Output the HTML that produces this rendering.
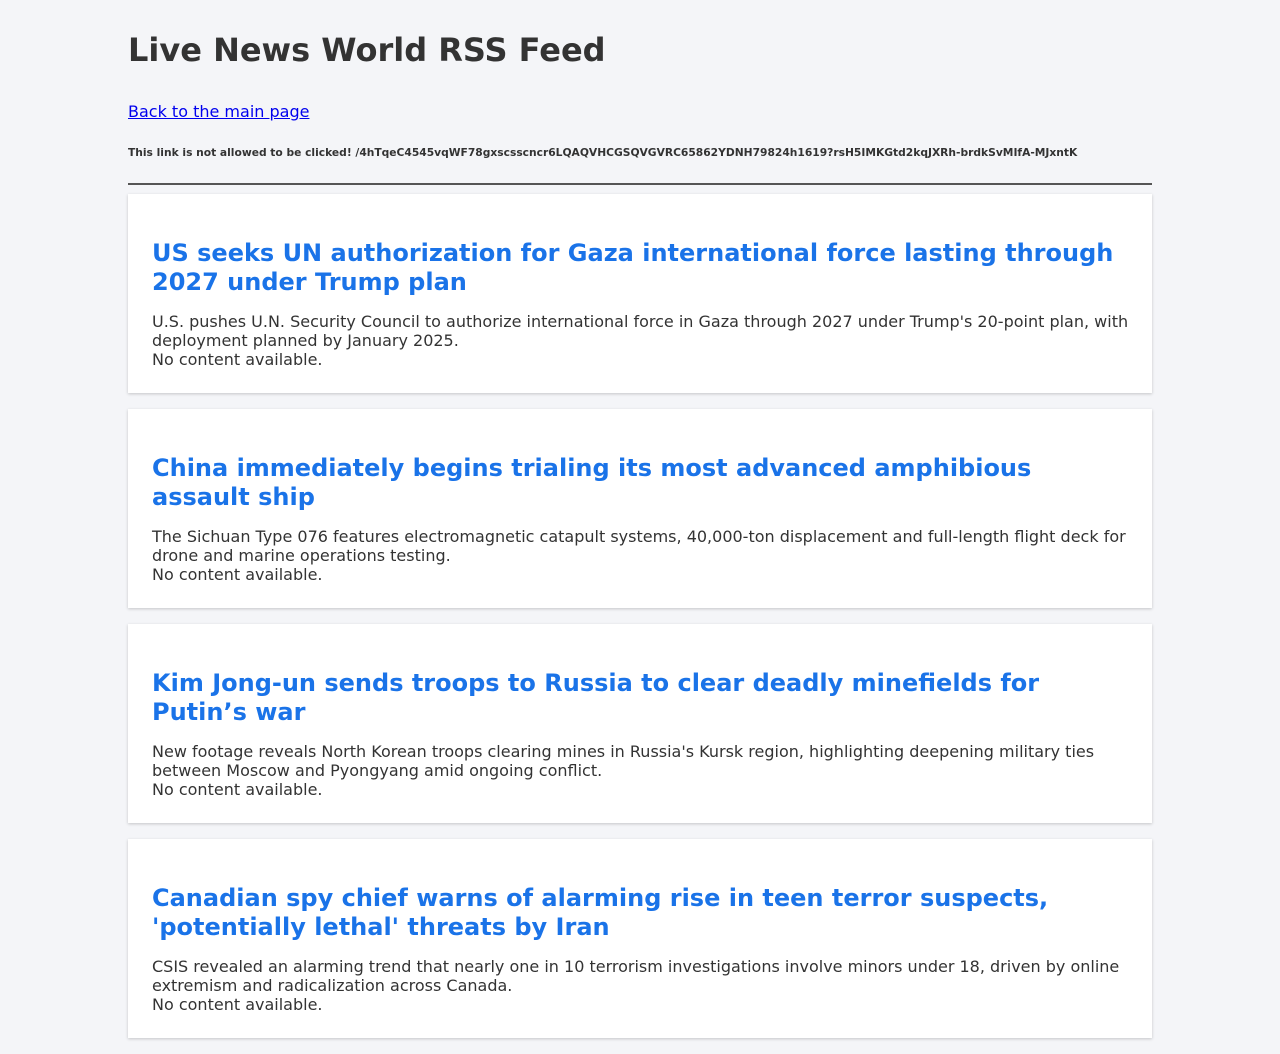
<!DOCTYPE html>
<html><head><meta charset="utf-8"><style>
body{margin:0;background:#f4f5f8;font-family:"DejaVu Sans","Liberation Sans",sans-serif;color:#333;}
.c{width:1024px;margin:0 auto;padding-top:32px;}
h1{margin:0;font-size:32px;line-height:37px;font-weight:bold;color:#333;}
.back{display:block;margin-top:33px;font-size:16px;line-height:19px;color:#0000ee;}
.warn{margin-top:25px;font-size:10.7px;line-height:13px;font-weight:bold;color:#333;white-space:nowrap;}
hr{margin:24px 0 0;border:0;border-top:2px solid #555;height:0;}
.card{background:#fff;margin-top:9px;padding:24px 18px 24px 24px;box-shadow:0 1px 3px rgba(0,0,0,.2);margin-bottom:16px;}
.card+.card{margin-top:0;}
h2{margin:21px 0 15px;font-size:24px;line-height:29px;color:#1a73e8;font-weight:bold;}
p{margin:0;font-size:16px;line-height:19px;color:#333;}
</style></head><body><div class="c">
<h1>Live News World RSS Feed</h1>
<a class="back" href="#">Back to the main page</a>
<div class="warn">This link is not allowed to be clicked! /4hTqeC4545vqWF78gxscsscncr6LQAQVHCGSQVGVRC65862YDNH79824h1619?rsH5IMKGtd2kqJXRh-brdkSvMIfA-MJxntK</div>
<hr>
<div class="card"><h2>US seeks UN authorization for Gaza international force lasting through 2027 under Trump plan</h2><p>U.S. pushes U.N. Security Council to authorize international force in Gaza through 2027 under Trump's 20-point plan, with deployment planned by January 2025.<br>No content available.</p></div>
<div class="card"><h2>China immediately begins trialing its most advanced amphibious assault ship</h2><p>The Sichuan Type 076 features electromagnetic catapult systems, 40,000-ton displacement and full-length flight deck for drone and marine operations testing.<br>No content available.</p></div>
<div class="card"><h2>Kim Jong-un sends troops to Russia to clear deadly minefields for Putin’s war</h2><p>New footage reveals North Korean troops clearing mines in Russia's Kursk region, highlighting deepening military ties between Moscow and Pyongyang amid ongoing conflict.<br>No content available.</p></div>
<div class="card"><h2>Canadian spy chief warns of alarming rise in teen terror suspects, 'potentially lethal' threats by Iran</h2><p>CSIS revealed an alarming trend that nearly one in 10 terrorism investigations involve minors under 18, driven by online extremism and radicalization across Canada.<br>No content available.</p></div>
</div></body></html>
